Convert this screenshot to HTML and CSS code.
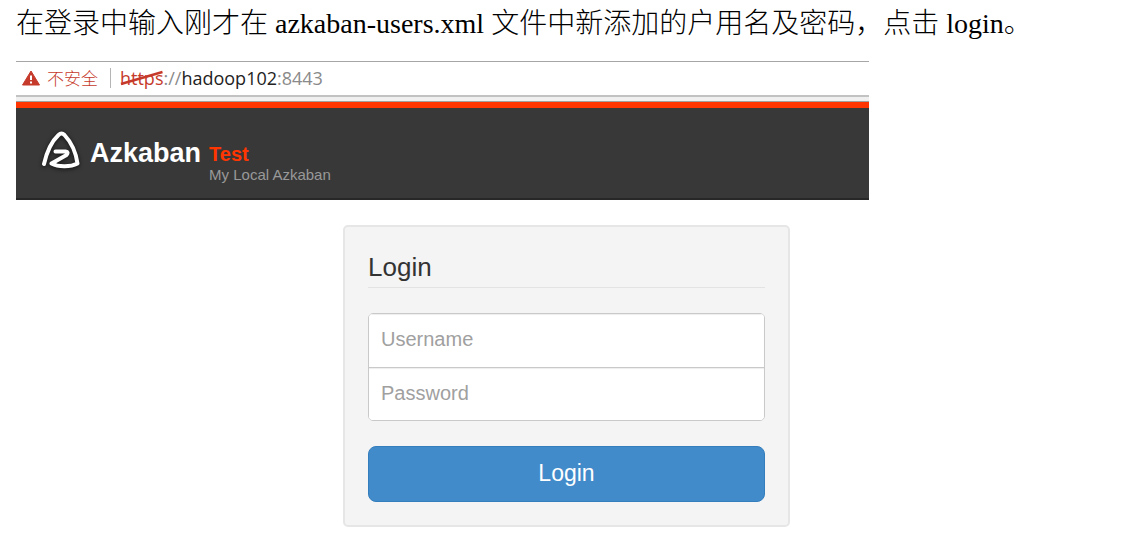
FILE: index.html
```html
<!DOCTYPE html>
<html lang="zh-CN">
<head>
<meta charset="utf-8">
<title>Azkaban Login</title>
<link rel="stylesheet" href="styles.css">
</head>
<body>
<main class="page">
  <p class="step">在登录中输入刚才在 azkaban-users.xml 文件中新添加的户用名及密码，点击 login。</p>
  <section class="shot">
    <div class="address">
      <svg class="warn" viewBox="0 0 18 16" aria-hidden="true">
        <path d="M9 1 17.5 15H.5z" fill="#c63a2b" stroke="#c63a2b" stroke-linejoin="round"/>
        <path d="M9 5.500v4.500M9 11.500v2" stroke="#fff" stroke-width="2"/>
      </svg>
      <span class="insecure">不安全</span>
      <span class="url"><span class="scheme">https<svg class="slash" viewBox="0 0 44 16" preserveAspectRatio="none" aria-hidden="true"><path d="M1 14 43 2" stroke="#c63a2b" stroke-width="2.5"/></svg></span>://<span class="host">hadoop102</span>:8443</span>
    </div>
    <div class="toolbar-edge"></div>
    <header class="navbar">
      <svg class="logo" viewBox="0 0 44 44" aria-hidden="true">
        <path d="M4 35C7 22 12 12 18.500 6Q21.500 3 24.500 6C31 13 36 24 37.500 34.500C30 38.500 18 38 11.500 34.500L26.500 26Q29 23 25.500 22.500H15.500" fill="none" stroke="#fff" stroke-width="4" stroke-linecap="round" stroke-linejoin="round"/>
      </svg>
      <h1 class="brand">Azkaban</h1>
      <div class="instance">
        <span class="name">Test</span>
        <span class="label">My Local Azkaban</span>
      </div>
    </header>
    <form class="login">
      <h2 class="title">Login</h2>
      <div class="fields">
        <input class="field" type="text" placeholder="Username" aria-label="Username">
        <input class="field" type="password" placeholder="Password" aria-label="Password">
      </div>
      <button class="submit" type="button">Login</button>
    </form>
  </section>
</main>
</body>
</html>
```
FILE: styles.css
```css
* {
  box-sizing: border-box;
}

body {
  margin: 0;
  background: #fff;
  font-family: "Liberation Sans", Arial, sans-serif;
}

.page {
  padding: 4px 16px 28px;
}

.step {
  margin: 0 0 17px;
  font: 28px/40px "Liberation Serif", "Noto Sans CJK SC", serif;
  font-weight: 300;
  color: #000;
}

.shot {
  margin-right: 236px;
}

.address {
  display: flex;
  align-items: center;
  height: 34px;
  padding: 0 0 2px 6px;
  border-top: 1px solid #a6a6a6;
  font: 18px/24px "Open Sans", "Noto Sans CJK SC", sans-serif;
}

.warn {
  width: 18px;
  height: 16px;
  margin-right: 7px;
}

.insecure {
  padding-right: 12px;
  border-right: 1px solid #b5b5b5;
  font: 17px/20px "Noto Sans CJK SC", sans-serif;
  font-weight: 300;
  color: #c63a2b;
}

.url {
  padding-left: 9px;
  color: #8a8a8a;
}

.scheme {
  position: relative;
  color: #c63a2b;
}

.slash {
  position: absolute;
  left: 0;
  top: 4px;
  width: 100%;
  height: 16px;
}

.host {
  color: #222;
}

.toolbar-edge {
  height: 7px;
  border-top: 2px solid #c2c2c2;
  border-bottom: 1px solid #a0a0a0;
  background: #f0f0f0;
}

.navbar {
  display: flex;
  align-items: flex-start;
  height: 98px;
  padding: 25px 24px 0;
  border-top: 6px solid #ff3601;
  border-bottom: 2px solid #272727;
  background: #383838;
}

.logo {
  width: 44px;
  height: 44px;
  margin-top: -4px;
  filter: drop-shadow(0 1px 2px #111);
}

.brand {
  margin: 4px 8px 0 6px;
  font-size: 27px;
  line-height: 32px;
  color: #fff;
}

.instance {
  display: flex;
  flex-direction: column;
  padding-top: 9px;
}

.name {
  font-size: 20px;
  font-weight: bold;
  line-height: 24px;
  color: #ff3601;
}

.label {
  font-size: 15px;
  line-height: 18px;
  color: #999;
}

.login {
  max-width: 447px;
  margin: 25px 79px 0 auto;
  padding: 23px;
  border: 2px solid #e6e6e6;
  border-radius: 5px;
  background: #f4f4f4;
}

.title {
  margin: 0 0 25px;
  padding-bottom: 2px;
  border-bottom: 1px solid #e3e3e3;
  font-size: 26px;
  font-weight: normal;
  line-height: 35px;
  color: #333;
}

.fields {
  overflow: hidden;
  margin-bottom: 25px;
  border: 1px solid #c9c9c9;
  border-radius: 5px;
  background: #fff;
}

.field {
  display: block;
  width: 100%;
  height: 53px;
  padding: 0 12px 2px;
  border: 0;
  background: #fff;
  box-shadow: inset 0 1px 1px #eee;
  font: 20px/26px "Liberation Sans", Arial, sans-serif;
  color: #555;
}

.field + .field {
  border-top: 1px solid #c9c9c9;
}

.field::placeholder {
  color: #a0a0a0;
  opacity: 1;
}

.submit {
  display: block;
  width: 100%;
  height: 56px;
  padding-bottom: 4px;
  border: 1px solid #357ebd;
  border-radius: 8px;
  background: #428bca;
  font: 23px/30px "Liberation Sans", Arial, sans-serif;
  color: #fff;
}
```
